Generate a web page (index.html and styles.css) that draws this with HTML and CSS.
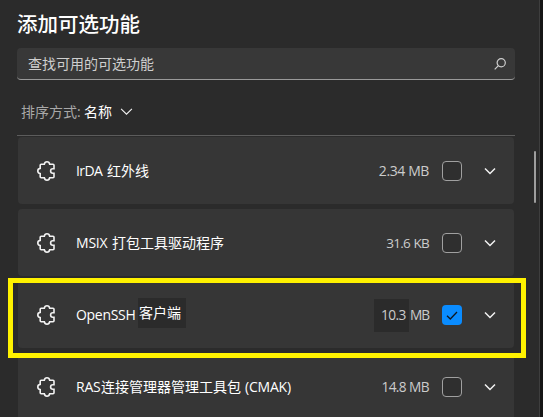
FILE: index.html
```html
<!DOCTYPE html>
<html lang="zh-CN">
<head>
<meta charset="utf-8">
<title>添加可选功能</title>
<link rel="stylesheet" href="styles.css">
</head>
<body>
<svg class="defs" aria-hidden="true">
  <symbol id="puzzle" viewBox="0 0 20 22">
    <path d="M5.2 4.3H8.3Q8.7 1.8 11 1.8T13.7 4.3H17Q18 4.3 18 5.3V8.8H16.8A2.2 2.2 0 0 0 16.8 13.2H18V16.7Q18 17.7 17 17.7H13.7Q13.3 20.2 11 20.2T8.3 17.7H5.2Q4.2 17.7 4.2 16.7V13.6Q1.8 13.2 1.8 11T4.2 8.4V5.3Q4.2 4.3 5.2 4.3Z"/>
  </symbol>
  <symbol id="chevron" viewBox="0 0 12 8"><path d="M1 1.5L6 6.5L11 1.5"/></symbol>
</svg>
<main class="dialog">
  <h1 class="title">添加可选功能</h1>
  <div class="search">
    <span>查找可用的可选功能</span>
    <svg class="search-icon" viewBox="0 0 12 12"><circle cx="7.2" cy="4.8" r="4.1"/><path d="M4.2 7.8L.7 11.3"/></svg>
  </div>
  <div class="sort">
    <span class="sort-label">排序方式:</span><span class="sort-value">名称</span>
    <svg class="sort-chevron"><use href="#chevron"/></svg>
  </div>
  <ul class="list">
    <li class="card">
      <svg class="puzzle"><use href="#puzzle"/></svg>
      <span class="name"><span class="lat irda">IrDA</span>红外线</span>
      <span class="size">2.34 MB</span><i class="box"></i>
      <svg class="chevron"><use href="#chevron"/></svg>
    </li>
    <li class="card">
      <svg class="puzzle"><use href="#puzzle"/></svg>
      <span class="name"><span class="lat msix">MSIX</span>打包工具驱动程序</span>
      <span class="size tight">31.6 KB</span><i class="box"></i>
      <svg class="chevron"><use href="#chevron"/></svg>
    </li>
    <li class="card">
      <svg class="puzzle"><use href="#puzzle"/></svg>
      <span class="name"><span class="lat ssh">OpenSSH</span><span class="patch">客户端</span></span>
      <span class="size snug split"><span class="size-patch">10.3</span><span>MB</span></span>
      <i class="box checked"><svg viewBox="0 0 20 20"><path d="M5 10.7L8.3 14L15 7"/></svg></i>
      <svg class="chevron"><use href="#chevron"/></svg>
    </li>
    <li class="card">
      <svg class="puzzle"><use href="#puzzle"/></svg>
      <span class="name"><span class="lat ras">RAS</span>连接管理器管理工具包<span class="lat cmak">(CMAK)</span></span>
      <span class="size snug">14.8 MB</span><i class="box"></i>
      <svg class="chevron"><use href="#chevron"/></svg>
    </li>
  </ul>
</main>
<div class="scrollbar"></div>
<div class="highlight"></div>
</body>
</html>
```
FILE: styles.css
```css
* { box-sizing: border-box; }
body {
  margin: 0;
  width: 543px;
  height: 417px;
  overflow: hidden;
  background: #151515;
  color: #fff;
  font: 14px/20px "Open Sans", "Noto Sans CJK SC", sans-serif;
}
.defs { position: absolute; width: 0; height: 0; }
svg { fill: none; stroke: #f2f2f2; flex: none; }
.dialog {
  width: 540px;
  height: 417px;
  padding: 8px 24px 0 17px;
  background: #2b2b2b;
  border-right: 1px solid #3e3e3e;
  overflow: hidden;
}
.title {
  margin: 0 0 10px;
  font: 500 20.5px/30px "Noto Sans CJK SC", sans-serif;
}
.search {
  display: flex;
  align-items: center;
  justify-content: space-between;
  height: 32px;
  padding: 0 9px 0 11px;
  background: #383838;
  border-bottom: 1px solid #9a9a9a;
  border-radius: 4px;
  color: #cfcfcf;
}
.search-icon { width: 12px; height: 12px; stroke: #cfcfcf; stroke-width: 1.2; }
.sort {
  display: flex;
  align-items: center;
  height: 55px;
  padding: 8px 0 0 4px;
}
.sort-label { width: 63px; color: #a8a8a8; }
.sort-value { width: 36px; }
.sort-chevron { width: 13px; height: 9px; }
.list {
  display: grid;
  gap: 5px;
  margin: 0;
  padding: 1px 1px 0;
  border-top: 1px solid #5c5c5c;
  list-style: none;
}
.card {
  display: flex;
  align-items: center;
  height: 67px;
  padding: 0 18px 0 18px;
  background: #363636;
  border-radius: 4px;
}
.puzzle { width: 20px; height: 22px; margin-right: 20px; stroke-width: 1.6; }
.name { display: flex; align-items: center; flex: 1; white-space: nowrap; }
.lat { flex: none; letter-spacing: -.2px; }
.irda { width: 31px; letter-spacing: -.6px; }
.msix { width: 36px; }
.ssh { width: 62px; letter-spacing: -.3px; }
.ras { width: 25px; }
.cmak { margin-left: 4px; }
.patch { width: 48px; height: 30px; padding: 5px 1px; margin-top: -3px; background: #2b2b2b; }
.size { margin-right: 13px; padding-top: 1px; color: #ccc; letter-spacing: -.4px; white-space: nowrap; }
.tight { font-size: 13.5px; letter-spacing: -.7px; word-spacing: .5px; }
.snug { font-size: 13.7px; letter-spacing: -.6px; }
.split { display: flex; align-items: center; gap: 1px; }
.split > :last-child { width: 19px; letter-spacing: -1px; }
.size-patch { width: 35px; height: 33px; padding: 6px 0 0 7px; background: #2b2b2b; }
.box {
  width: 20px;
  height: 20px;
  margin-right: 22px;
  border: 1px solid #a0a0a0;
  border-radius: 4px;
  background: #2f2f2f;
}
.checked { border: 0; background: #0a8cff; }
.checked svg { display: block; stroke: #101820; stroke-width: 1.3; }
.chevron { width: 12px; height: 8px; stroke-width: 1.5; }
.scrollbar {
  position: absolute;
  left: 534px;
  top: 151px;
  width: 2px;
  height: 52px;
  border-radius: 1px;
  background: #9e9e9e;
}
.highlight {
  position: absolute;
  left: 8px;
  top: 278px;
  width: 518px;
  height: 80px;
  border: 5px solid #fff200;
}
```
